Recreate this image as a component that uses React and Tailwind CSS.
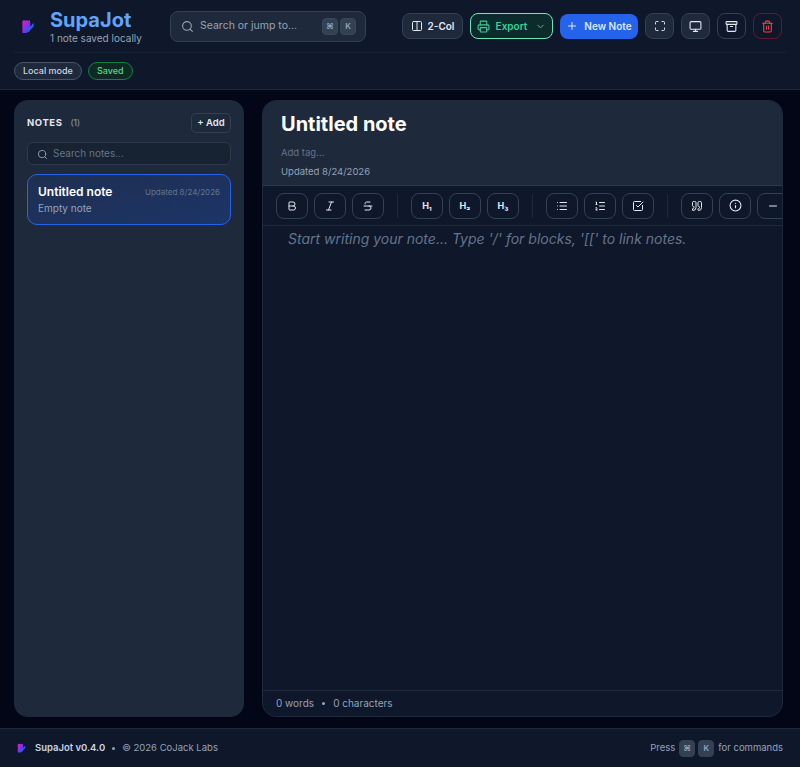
import {
  Archive,
  Bold,
  CheckSquare,
  ChevronDown,
  Columns2,
  Info,
  Italic,
  List,
  ListOrdered,
  Maximize,
  Minus,
  Monitor,
  Plus,
  Printer,
  Quote,
  Search,
  Strikethrough,
  Trash2
} from "lucide-react";

function Logo({ className }) {
  return (
    <svg viewBox="0 0 14 16" className={className}>
      <defs>
        <linearGradient id="logoGrad" x1="0" y1="0" x2="1" y2="1">
          <stop offset="0" stopColor="#ec1fa8" />
          <stop offset="0.5" stopColor="#8b2cf5" />
          <stop offset="1" stopColor="#2b4cf0" />
        </linearGradient>
      </defs>
      <path d="M1 2 L3 1 L4 2 L6 1 L7 2 L9 1 L9.5 5 L9 13 L5 15 L1 15 Z" fill="url(#logoGrad)" />
      <path d="M5 8 L7.5 10.5 L13 4 L13 8 L8 13 L5 11 Z" fill="#2563eb" />
    </svg>
  );
}

function Key({ children, className = "" }) {
  return (
    <span className={`flex h-[17px] w-[16px] items-center justify-center rounded-[4px] border border-[#3b4657] bg-[#334155] text-[8px] font-semibold text-[#94a3b8] ${className}`}>
      {children}
    </span>
  );
}

function ToolButton({ children }) {
  return (
    <button className="flex h-[26px] w-[32px] shrink-0 items-center justify-center rounded-[8px] border border-[#334155] text-[#e2e8f0]">
      {children}
    </button>
  );
}

function IconButton({ children, className }) {
  return (
    <button className={`flex h-[26px] w-[29px] items-center justify-center rounded-[8px] border ${className}`}>
      {children}
    </button>
  );
}

export default function App() {
  return (
    <div className="flex h-[767px] flex-col overflow-hidden bg-[#020617] font-['Inter',sans-serif] text-[#e2e8f0]">
      <header className="h-[90px] shrink-0 border-b border-[#1e293b] bg-[#0f172a] px-[14px]">
        <div className="flex h-[53px] items-center border-b border-[#172033]">
          <Logo className="ml-[7px] h-[15px] w-[14px]" />
          <div className="ml-[15px] w-[120px]">
            <div className="text-[20px] leading-[24px] font-bold text-[#60a5fa]">SupaJot</div>
            <div className="text-[10px] leading-[13px] text-[#94a3b8]">1 note saved locally</div>
          </div>
          <div className="flex h-[31px] w-[196px] items-center rounded-[8px] border border-[#334155] bg-[#1e293b] pr-[9px] pl-[10px]">
            <Search className="h-[13px] w-[13px] text-[#94a3b8]" />
            <span className="ml-[6px] text-[10.5px] text-[#94a3b8]">Search or jump to...</span>
            <div className="ml-auto flex gap-[2px]">
              <Key>⌘</Key>
              <Key>K</Key>
            </div>
          </div>
          <div className="ml-[36px] flex items-center gap-[7px]">
            <button className="flex h-[26px] w-[61px] items-center justify-center gap-[5px] rounded-[8px] border border-[#334155] bg-[#1e293b] text-[10px] font-semibold text-[#e2e8f0]">
              <Columns2 className="h-[12px] w-[12px]" />
              2-Col
            </button>
            <button className="flex h-[26px] w-[83px] items-center justify-center gap-[6px] rounded-[8px] border border-[#6ee7b7] bg-[#0d2a2c] text-[10px] font-semibold text-[#34d399]">
              <Printer className="h-[13px] w-[13px]" />
              Export
              <ChevronDown className="ml-[2px] h-[11px] w-[11px]" />
            </button>
            <button className="flex h-[25px] w-[78px] items-center justify-center gap-[6px] rounded-[8px] bg-[#2563eb] text-[10px] font-semibold text-[#dbeafe]">
              <Plus className="h-[12px] w-[12px]" />
              New Note
            </button>
            <IconButton className="border-[#334155] bg-[#1e293b] text-[#e2e8f0]">
              <Maximize className="h-[12px] w-[12px]" />
            </IconButton>
            <IconButton className="border-[#334155] bg-[#1e293b] text-[#e2e8f0]">
              <Monitor className="h-[13px] w-[13px]" />
            </IconButton>
            <IconButton className="border-[#334155] bg-transparent text-[#e2e8f0]">
              <Archive className="h-[13px] w-[13px]" />
            </IconButton>
            <IconButton className="border-[#5f1d2b] bg-transparent text-[#ef4444]">
              <Trash2 className="h-[13px] w-[13px]" />
            </IconButton>
          </div>
        </div>
        <div className="flex h-[36px] items-center gap-[6px]">
          <span className="flex h-[18px] items-center rounded-full border border-[#475569] bg-[#1e293b] px-[8px] text-[9px] font-medium text-[#cbd5e1]">
            Local mode
          </span>
          <span className="flex h-[18px] items-center rounded-full border border-[#15803d] bg-[#0f2a24] px-[8px] text-[9px] font-medium text-[#4ade80]">
            Saved
          </span>
        </div>
      </header>

      <main className="flex min-h-0 flex-1 gap-[18px] px-[14px] pt-[10px] pb-[11px] pr-[17px]">
        <aside className="flex w-[230px] shrink-0 flex-col rounded-[14px] bg-[#1e293b] px-[13px] pt-[13px]">
          <div className="flex h-[20px] items-center justify-between">
            <div className="flex items-center gap-[8px]">
              <span className="text-[9.5px] font-bold tracking-[0.06em] text-[#e2e8f0]">NOTES</span>
              <span className="text-[8.5px] text-[#94a3b8]">(1)</span>
            </div>
            <button className="flex h-[20px] w-[40px] items-center justify-center rounded-[5px] border border-[#334155] text-[9.5px] font-semibold text-[#e2e8f0]">
              + Add
            </button>
          </div>
          <div className="mt-[9px] flex h-[23px] items-center rounded-[6px] border border-[#2b3a4e] bg-[#172233] pl-[9px]">
            <Search className="mt-[1px] h-[11px] w-[11px] text-[#94a3b8]" />
            <span className="ml-[5px] text-[10px] text-[#64748b]">Search notes...</span>
          </div>
          <div className="mt-[9px] h-[51px] rounded-[10px] border border-[#2563eb] bg-gradient-to-br from-[#1e2f50] to-[#1c3468] px-[10px] pt-[9px]">
            <div className="flex items-center justify-between">
              <span className="text-[12px] leading-[15px] font-semibold text-white">Untitled note</span>
              <span className="text-[8px] text-[#64748b]">Updated 8/24/2026</span>
            </div>
            <div className="mt-[3px] text-[10px] leading-[13px] text-[#94a3b8]">Empty note</div>
          </div>
        </aside>

        <section className="flex min-w-0 flex-1 flex-col overflow-hidden rounded-[14px] border border-[#1e293b] bg-[#0f172a]">
          <div className="h-[85px] shrink-0 border-b border-[#2b3a4e] bg-[#1e293b] px-[18px] pt-[10px]">
            <h1 className="text-[20px] leading-[27px] font-bold text-white">Untitled note</h1>
            <div className="mt-[9px] text-[9.5px] leading-[12px] text-[#64748b]">Add tag...</div>
            <div className="mt-[7px] text-[9.5px] leading-[12px] text-[#94a3b8]">Updated 8/24/2026</div>
          </div>
          <div className="flex h-[40px] shrink-0 items-center gap-[6px] overflow-hidden border-b border-[#1e293b] pl-[13px]">
            <ToolButton><Bold className="h-[12px] w-[12px]" /></ToolButton>
            <ToolButton><Italic className="h-[12px] w-[12px]" /></ToolButton>
            <ToolButton><Strikethrough className="h-[12px] w-[12px]" /></ToolButton>
            <div className="mx-[7px] h-[24px] w-px shrink-0 bg-[#1e293b]" />
            <ToolButton><span className="text-[9px] font-bold">H₁</span></ToolButton>
            <ToolButton><span className="text-[9px] font-bold">H₂</span></ToolButton>
            <ToolButton><span className="text-[9px] font-bold">H₃</span></ToolButton>
            <div className="mx-[7px] h-[24px] w-px shrink-0 bg-[#1e293b]" />
            <ToolButton><List className="h-[12px] w-[12px]" /></ToolButton>
            <ToolButton><ListOrdered className="h-[12px] w-[12px]" /></ToolButton>
            <ToolButton><CheckSquare className="h-[12px] w-[12px]" /></ToolButton>
            <div className="mx-[7px] h-[24px] w-px shrink-0 bg-[#1e293b]" />
            <ToolButton><Quote className="h-[12px] w-[12px]" /></ToolButton>
            <ToolButton><Info className="h-[13px] w-[13px]" /></ToolButton>
            <ToolButton><Minus className="h-[12px] w-[12px]" /></ToolButton>
          </div>
          <div className="flex-1 px-[25px] pt-[4px] text-[14px] leading-[18px] text-[#64748b] italic">
            Start writing your note... Type '/' for blocks, '[[' to link notes.
          </div>
          <div className="flex h-[26px] shrink-0 items-center gap-[8px] border-t border-[#1e293b] px-[13px] text-[10px] text-[#94a3b8]">
            <span>0 words</span>
            <span className="h-[3px] w-[3px] rounded-full bg-[#94a3b8]" />
            <span>0 characters</span>
          </div>
        </section>
      </main>

      <footer className="flex h-[39px] shrink-0 items-center border-t border-[#1e293b] bg-[#0f172a] pr-[17px] pl-[17px] text-[9.5px]">
        <Logo className="h-[10px] w-[9px]" />
        <span className="ml-[9px] font-semibold text-[#cbd5e1]">SupaJot v0.4.0</span>
        <span className="mx-[7px] h-[3px] w-[3px] rounded-full bg-[#94a3b8]" />
        <span className="text-[#94a3b8]">© 2026 CoJack Labs</span>
        <div className="ml-auto flex items-center gap-[3px] text-[#94a3b8]">
          <span className="mr-[1px]">Press</span>
          <Key className="border-[#334155] bg-[#1e293b]">⌘</Key>
          <Key className="border-[#334155] bg-[#1e293b]">K</Key>
          <span className="ml-[1px]">for commands</span>
        </div>
      </footer>
    </div>
  );
}
